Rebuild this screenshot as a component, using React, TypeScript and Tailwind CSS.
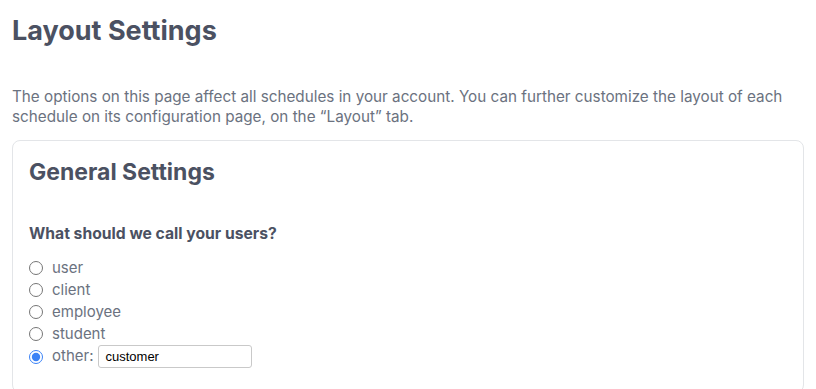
import { useState } from "react";

const options = ["user", "client", "employee", "student"];

export default function App() {
  const [choice, setChoice] = useState("other");
  const [other, setOther] = useState("customer");

  return (
    <div className="min-h-[389px] bg-white px-3 pt-[14px] font-['Inter',sans-serif]">
      <h1 className="text-[27px] font-bold leading-[34px] text-[#4b5162]">
        Layout Settings
      </h1>
      <p className="mt-[39px] text-[15.25px] leading-[20px] text-[#6b7280]">
        The options on this page affect all schedules in your account. You can
        further customize the layout of each schedule on its configuration
        page, on the “Layout” tab.
      </p>
      <div className="mt-[13px] rounded-lg border border-[#e3e5e8] px-4 pb-6 pt-4">
        <h2 className="text-[23px] font-bold leading-[30px] text-[#4b5162]">
          General Settings
        </h2>
        <h3 className="mt-[37px] text-[15.7px] font-bold leading-[20px] text-[#4b5162]">
          What should we call your users?
        </h3>
        <div className="mt-[13px] flex flex-col">
          {options.map((o) => (
            <label
              key={o}
              className="flex h-[22px] items-center gap-[9px] text-[15px] text-[#6b7280]"
            >
              <input
                type="radio"
                name="users"
                checked={choice === o}
                onChange={() => setChoice(o)}
                className="m-0 size-[14px]"
              />
              {o}
            </label>
          ))}
          <label className="flex h-[23px] items-center text-[15px] text-[#6b7280]">
            <input
              type="radio"
              name="users"
              checked={choice === "other"}
              onChange={() => setChoice("other")}
              className="m-0 size-[14px] accent-[#3b82f6]"
            />
            <span className="ml-[9px]">other:</span>
            <input
              type="text"
              value={other}
              onChange={(e) => setOther(e.target.value)}
              className="ml-[5px] h-[23px] w-[154px] rounded-[3px] border border-[#c9c9c9] px-[6px] font-['Liberation_Sans',sans-serif] text-[13px] text-black"
            />
          </label>
        </div>
      </div>
    </div>
  );
}
